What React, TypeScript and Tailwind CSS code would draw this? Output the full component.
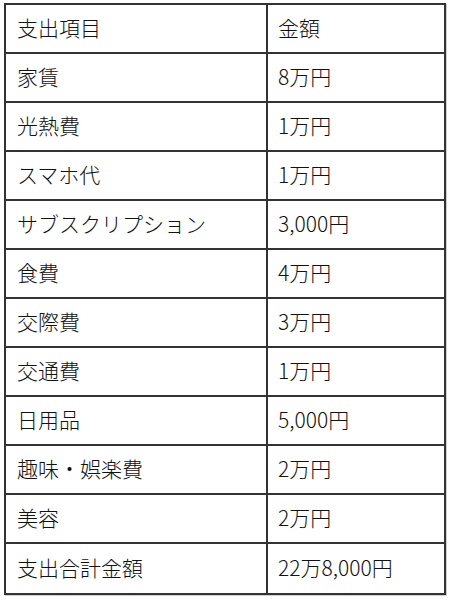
import React from "react";

const rows: [string, string][] = [
  ["支出項目", "金額"],
  ["家賃", "8万円"],
  ["光熱費", "1万円"],
  ["スマホ代", "1万円"],
  ["サブスクリプション", "3,000円"],
  ["食費", "4万円"],
  ["交際費", "3万円"],
  ["交通費", "1万円"],
  ["日用品", "5,000円"],
  ["趣味・娯楽費", "2万円"],
  ["美容", "2万円"],
  ["支出合計金額", "22万8,000円"],
];

export default function App() {
  return (
    <div className="w-[454px] h-[600px] bg-white pl-[4px] pt-[3px]">
      <div
        className="w-[442px] border-2 border-[#333] shadow-[1px_1px_0_#cfcfcf] text-[21px] leading-none font-light text-[#111]"
        style={{ fontFamily: '"Noto Sans CJK JP", "Noto Sans", sans-serif' }}
      >
        {rows.map(([item, amount], i) => (
          <div
            key={i}
            className={`flex h-[49px] ${i < rows.length - 1 ? "border-b-2 border-[#333]" : ""}`}
          >
            <div className="w-[262px] border-r-2 border-[#333] flex items-center pl-[11px] pb-[2px]">
              {item}
            </div>
            <div className="flex-1 flex items-center pl-[10px] pb-[2px] tabular-nums">{amount}</div>
          </div>
        ))}
      </div>
    </div>
  );
}
